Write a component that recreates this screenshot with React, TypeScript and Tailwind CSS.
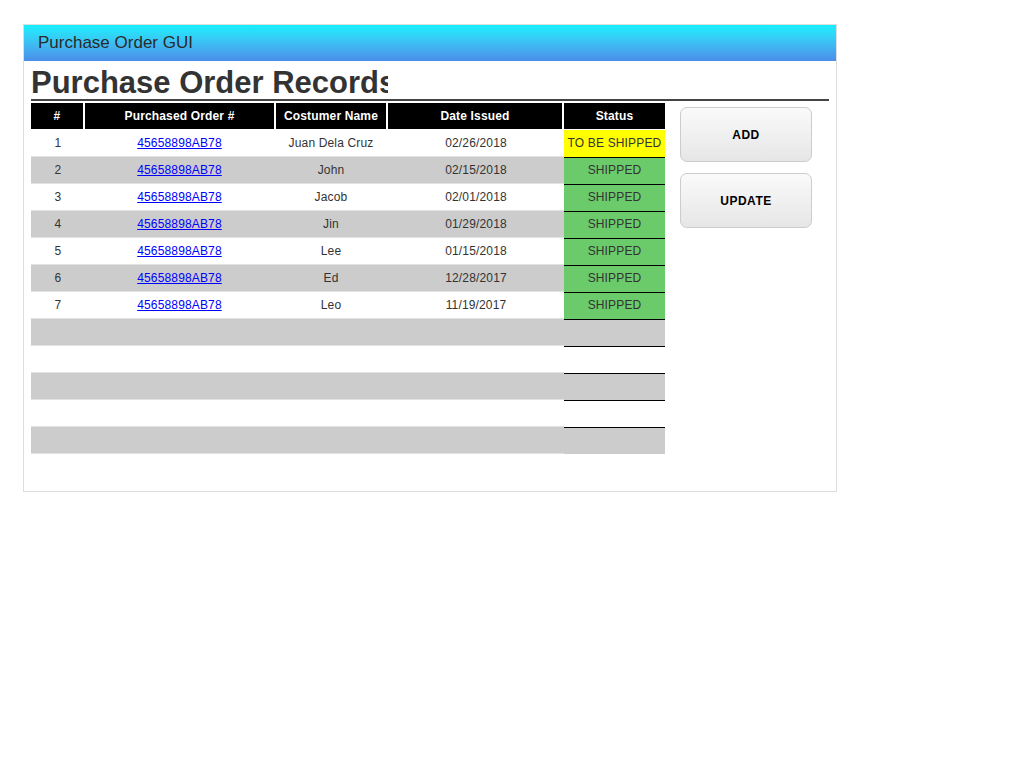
import React from "react";

type Row = { n: string; po: string; name: string; date: string; status: string };

const rows: Row[] = [
  { n: "1", po: "45658898AB78", name: "Juan Dela Cruz", date: "02/26/2018", status: "TO BE SHIPPED" },
  { n: "2", po: "45658898AB78", name: "John", date: "02/15/2018", status: "SHIPPED" },
  { n: "3", po: "45658898AB78", name: "Jacob", date: "02/01/2018", status: "SHIPPED" },
  { n: "4", po: "45658898AB78", name: "Jin", date: "01/29/2018", status: "SHIPPED" },
  { n: "5", po: "45658898AB78", name: "Lee", date: "01/15/2018", status: "SHIPPED" },
  { n: "6", po: "45658898AB78", name: "Ed", date: "12/28/2017", status: "SHIPPED" },
  { n: "7", po: "45658898AB78", name: "Leo", date: "11/19/2017", status: "SHIPPED" },
  { n: "", po: "", name: "", date: "", status: "" },
  { n: "", po: "", name: "", date: "", status: "" },
  { n: "", po: "", name: "", date: "", status: "" },
  { n: "", po: "", name: "", date: "", status: "" },
  { n: "", po: "", name: "", date: "", status: "" },
];

const cols = "grid grid-cols-[54px_191px_112px_176px_101px]";

export default function App() {
  return (
    <div className="min-h-[768px] bg-white pt-[24px] pl-[23px]" style={{ fontFamily: '"Liberation Sans", Arial, sans-serif' }}>
      <div className="w-[814px] h-[468px] border border-[#dddddd] bg-white">
        <div className="h-[36px] bg-gradient-to-b from-[#10f0fc] to-[#4a8de8] flex items-center pl-[14px] text-[17px] text-[#2a2a2a]">
          Purchase Order GUI
        </div>
        <div className="px-[7px]">
          <div className="w-[357px] overflow-hidden whitespace-nowrap pt-[7px] text-[31px] leading-[30px] font-bold text-[#333333]">
            Purchase Order Records
          </div>
          <div className="mt-[1px] h-[2px] bg-[#444444]" />
          <div className="flex mt-[2px]">
            <div className="w-[634px] tracking-[0.15px]">
              <div className={`${cols} h-[26px] text-white text-[12px] font-bold`}>
                <div className="bg-black border-r-2 border-white flex items-center justify-center">#</div>
                <div className="bg-black border-r-2 border-white flex items-center justify-center">Purchased Order #</div>
                <div className="bg-black border-r-2 border-white flex items-center justify-center">Costumer Name</div>
                <div className="bg-black border-r-2 border-white flex items-center justify-center">Date Issued</div>
                <div className="bg-black flex items-center justify-center">Status</div>
              </div>
              <div className="h-[1px]" />
              {rows.map((r, i) => {
                const bg = i % 2 === 0 ? "bg-white" : "bg-[#cccccc]";
                const statusBg =
                  r.status === "TO BE SHIPPED" ? "bg-[#ffff00]" : r.status === "SHIPPED" ? "bg-[#6bcb6b]" : bg;
                const statusBorder = i === 0 ? "border-t border-transparent" : "border-t border-black";
                return (
                  <div key={i} className={`${cols} h-[27px] ${bg} text-[12px] text-[#333333] border-b border-[#e2e2e2]`}>
                    <div className="flex items-center justify-center">{r.n}</div>
                    <div className="flex items-center justify-center pr-[2px]">
                      {r.po && (
                        <a href="#" className="text-[#0000ff] underline">
                          {r.po}
                        </a>
                      )}
                    </div>
                    <div className="flex items-center justify-center pr-[2px]">{r.name}</div>
                    <div className="flex items-center justify-center">{r.date}</div>
                    <div className={`flex items-center justify-center ${statusBg} ${statusBorder} -mb-[1px] pb-[2px]`}>{r.status}</div>
                  </div>
                );
              })}
            </div>
            <div className="ml-[15px] mt-[4px] flex flex-col gap-[11px]">
              <button className="w-[132px] h-[55px] rounded-[7px] border border-[#cccccc] bg-gradient-to-b from-[#fafafa] to-[#e6e6e6] text-[12px] font-bold tracking-[0.5px] text-black">
                ADD
              </button>
              <button className="w-[132px] h-[55px] rounded-[7px] border border-[#cccccc] bg-gradient-to-b from-[#fafafa] to-[#e6e6e6] text-[12px] font-bold tracking-[0.5px] text-black">
                UPDATE
              </button>
            </div>
          </div>
        </div>
      </div>
    </div>
  );
}
